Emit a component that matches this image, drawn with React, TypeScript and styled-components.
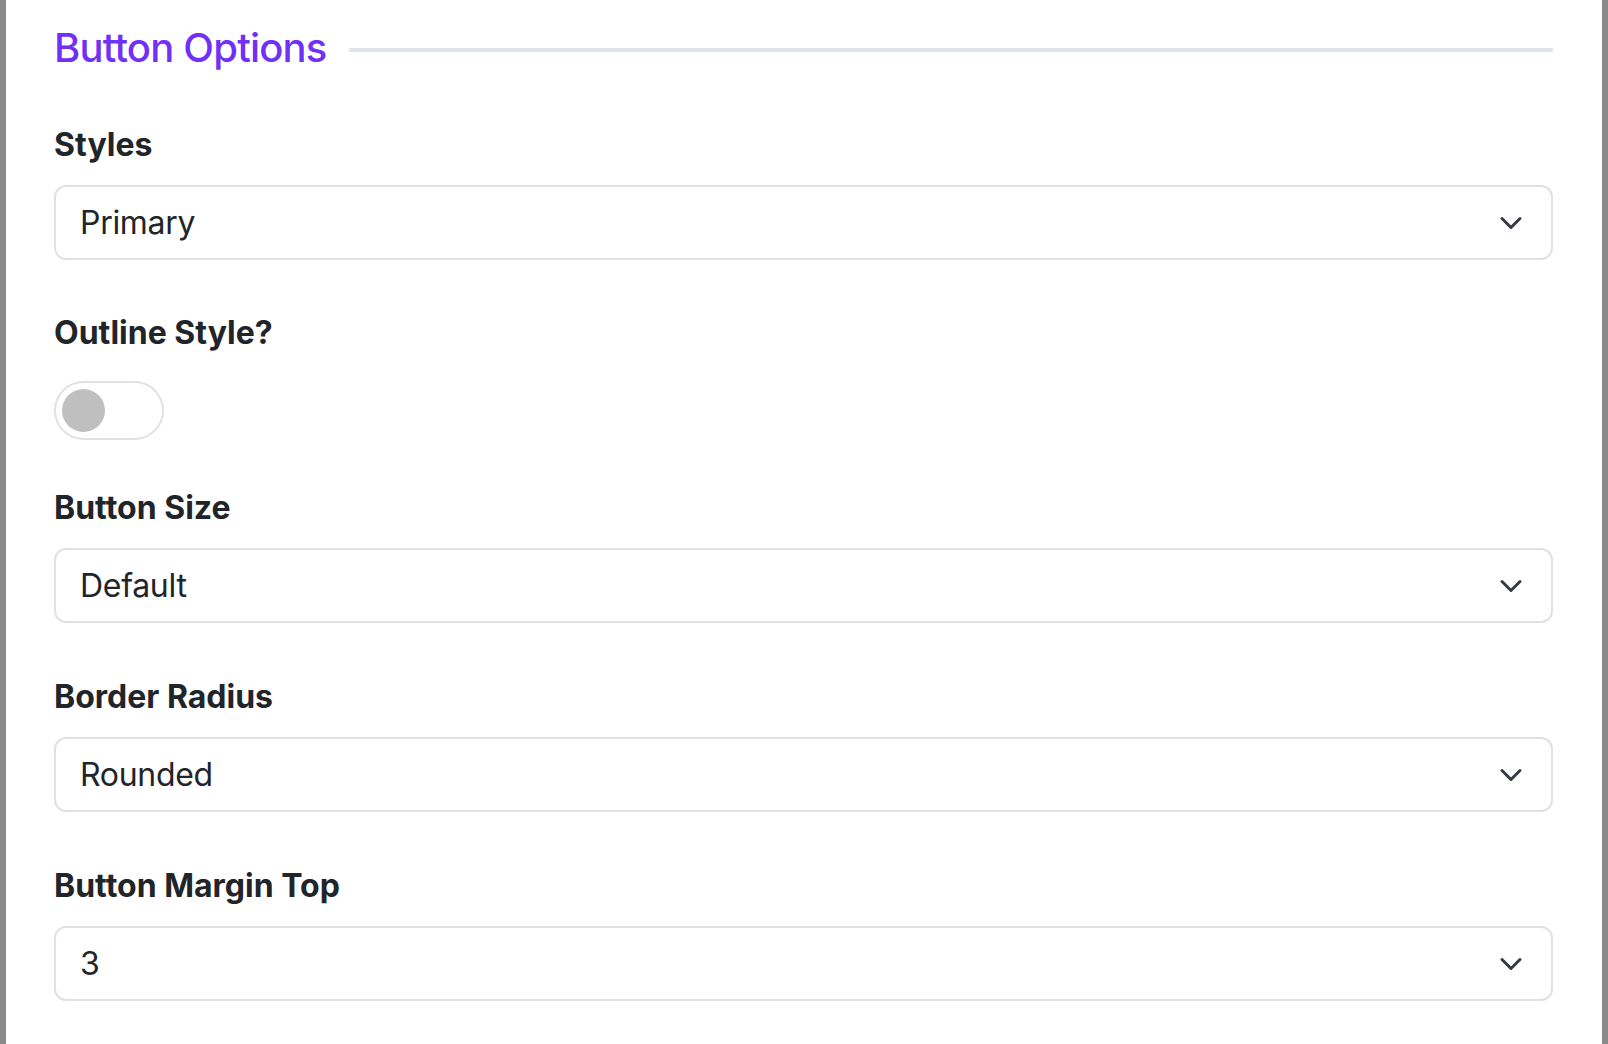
import React from 'react';
import styled, { createGlobalStyle } from 'styled-components';

const GlobalStyle = createGlobalStyle`
  html, body {
    margin: 0;
    padding: 0;
    background: #8a8a8a;
  }
  body {
    font-family: Inter, "Noto Sans", "Liberation Sans", sans-serif;
    color: #212529;
  }
  * {
    box-sizing: border-box;
  }
`;

const Panel = styled.div`
  background: #fff;
  margin: 0 6px;
  min-height: 1044px;
  padding: 24px 49px 0 48px;
`;

const SectionHeader = styled.div`
  display: flex;
  align-items: center;
  gap: 22px;
  margin-bottom: 49px;
`;

const SectionTitle = styled.h5`
  margin: 0;
  font-size: 40px;
  font-weight: 500;
  line-height: 1.2;
  letter-spacing: -0.8px;
  color: #7030f5;
  white-space: nowrap;
`;

const Rule = styled.div`
  flex: 1;
  height: 4px;
  margin-top: 4px;
  background: #e0e3e9;
  border-radius: 1px;
`;

const Field = styled.div<{ $gap?: number }>`
  margin-bottom: ${(p) => (p.$gap ?? 50)}px;
`;

const Label = styled.label<{ $space?: number }>`
  display: block;
  font-size: 32px;
  font-weight: 700;
  line-height: 1.5;
  color: #212529;
  margin-bottom: ${(p) => (p.$space ?? 16)}px;
`;

const SelectBox = styled.div`
  display: flex;
  align-items: center;
  justify-content: space-between;
  height: 75px;
  padding: 0 28px 0 24px;
  border: 2px solid #dee2e6;
  border-radius: 12px;
  font-size: 32px;
  line-height: 1.5;
  letter-spacing: -0.3px;
  color: #212529;
  background: #fff;
`;

const Chevron = styled.svg`
  width: 24px;
  height: 24px;
  flex: none;
`;

const Switch = styled.div`
  display: flex;
  align-items: center;
  width: 110px;
  height: 59px;
  padding: 0 6px;
  border: 2px solid #dee2e6;
  border-radius: 30px;
  background: #fff;
`;

const Knob = styled.span`
  width: 43px;
  height: 43px;
  border-radius: 50%;
  background: #bfbfbf;
`;

const Select = ({ value }: { value: string }) => (
  <SelectBox>
    <span>{value}</span>
    <Chevron viewBox="0 0 16 16" fill="none">
      <path
        d="M2 5l6 6 6-6"
        stroke="#343a40"
        strokeWidth="2"
        strokeLinecap="round"
        strokeLinejoin="round"
      />
    </Chevron>
  </SelectBox>
);

export default function App() {
  return (
    <>
      <GlobalStyle />
      <Panel>
        <SectionHeader>
          <SectionTitle>Button Options</SectionTitle>
          <Rule />
        </SectionHeader>

        <Field $gap={49}>
          <Label>Styles</Label>
          <Select value="Primary" />
        </Field>

        <Field $gap={44}>
          <Label $space={24}>Outline Style?</Label>
          <Switch>
            <Knob />
          </Switch>
        </Field>

        <Field>
          <Label>Button Size</Label>
          <Select value="Default" />
        </Field>

        <Field>
          <Label>Border Radius</Label>
          <Select value="Rounded" />
        </Field>

        <Field>
          <Label>Button Margin Top</Label>
          <Select value="3" />
        </Field>
      </Panel>
    </>
  );
}
